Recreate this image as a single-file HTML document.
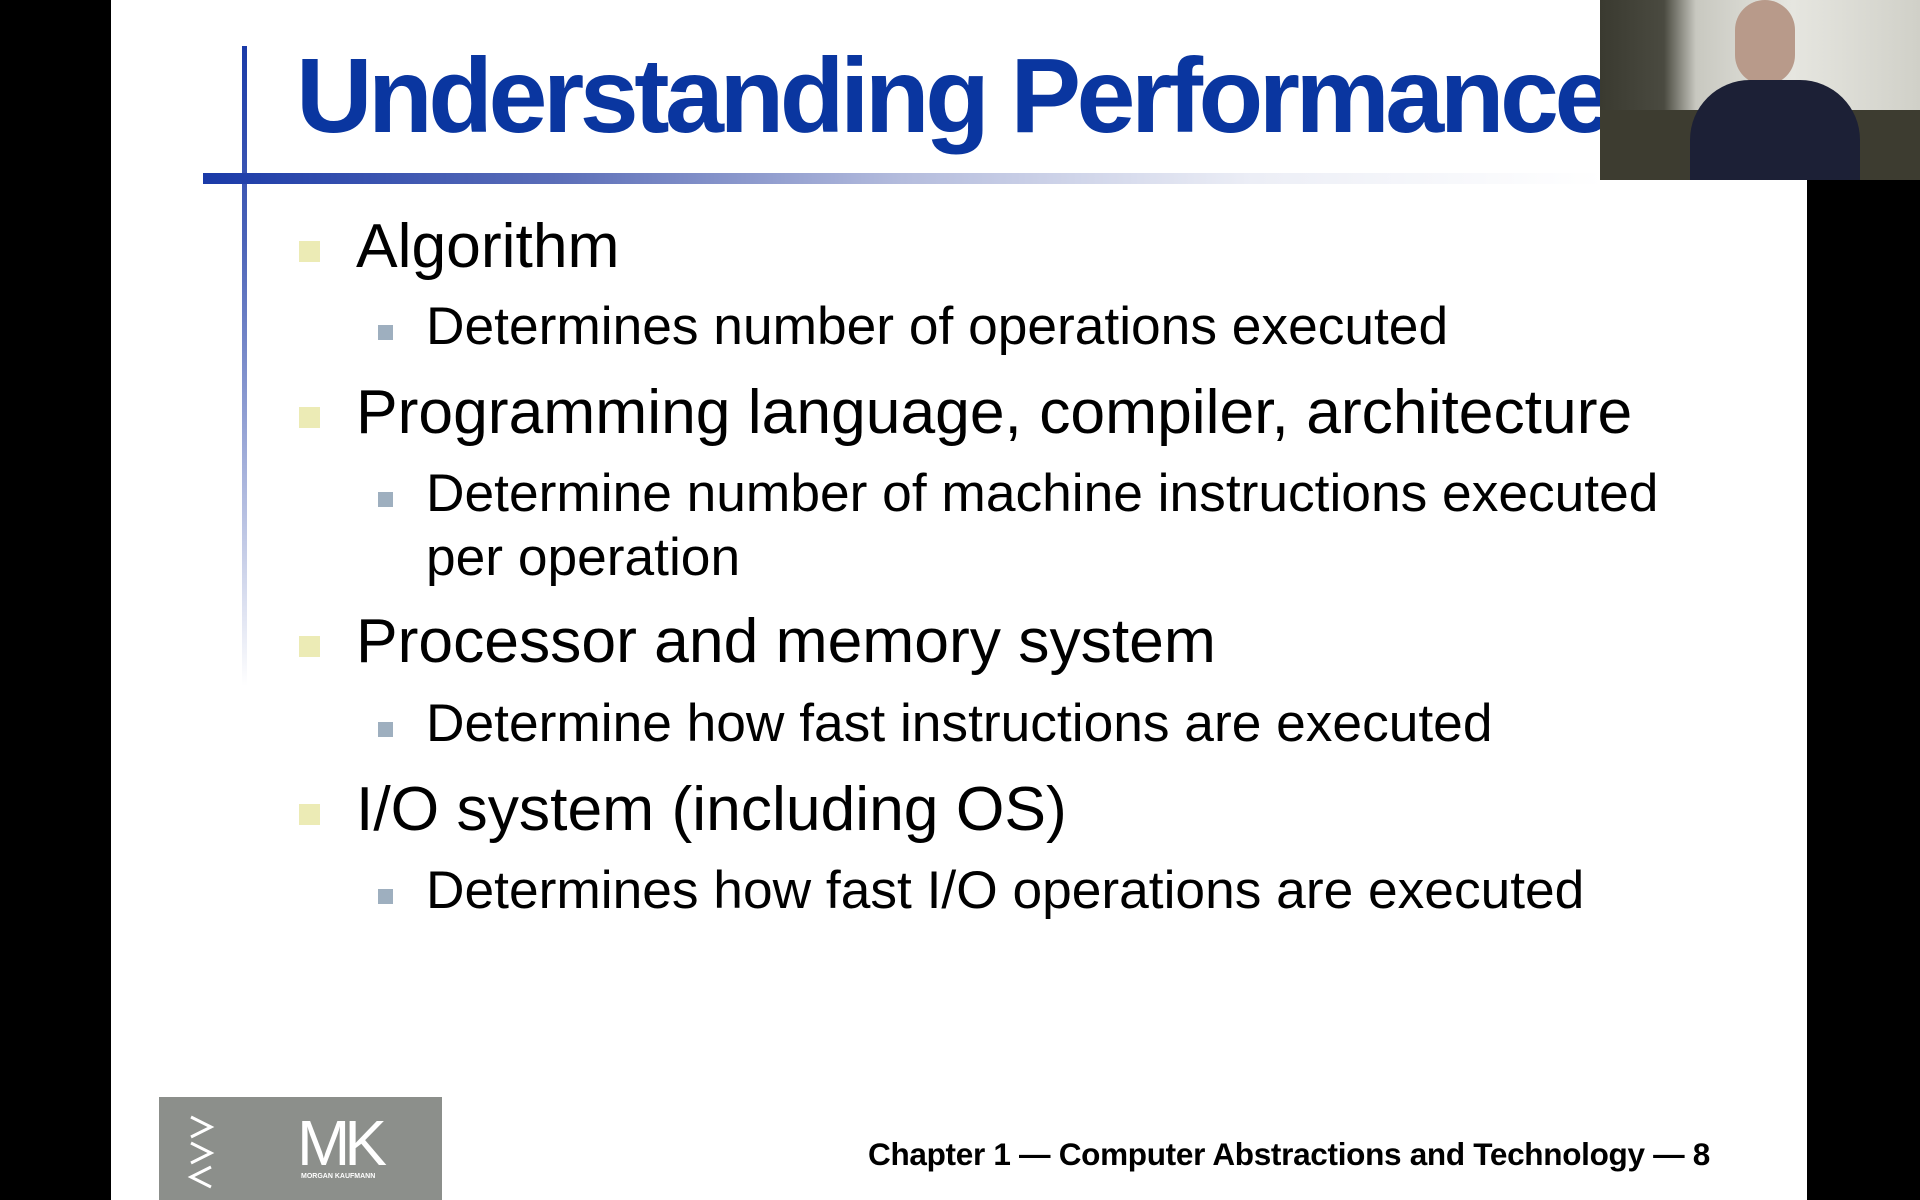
<!DOCTYPE html>
<html><head><meta charset="utf-8"><style>
body{margin:0;width:1920px;height:1200px;background:#000;position:relative;overflow:hidden;font-family:"Liberation Sans",Arial,sans-serif}
.slide{position:absolute;left:111px;top:0;width:1696px;height:1200px;background:#fff}
.t{position:absolute;white-space:nowrap;color:#000}
.b1{position:absolute;width:21px;height:21px;background:#ecebb5}
.b2{position:absolute;width:15px;height:15px;background:#9eafbf}
.l1{font-size:62.4px}
.l2{font-size:53.3px}
</style></head><body>
<div class="slide"></div>
<div style="position:absolute;left:242px;top:46px;width:5px;height:640px;background:linear-gradient(#1a3aa8,#4a62b8 30%,#c8cfe8 80%,rgba(255,255,255,0))"></div>
<div style="position:absolute;left:203px;top:173px;width:1400px;height:11px;background:linear-gradient(90deg,#1a3aa8,#5a6db8 25%,#b4bcdd 50%,#eceef6 75%,rgba(255,255,255,0))"></div>
<div class="t" style="left:296px;top:36px;font-size:106px;font-weight:bold;color:#0a36a0;letter-spacing:-4.5px">Understanding Performance</div>

<div class="b1" style="left:299px;top:241px"></div>
<div class="t l1" style="left:356px;top:211px">Algorithm</div>
<div class="b2" style="left:378px;top:325px"></div>
<div class="t l2" style="left:426px;top:296px">Determines number of operations executed</div>

<div class="b1" style="left:299px;top:407px"></div>
<div class="t l1" style="left:356px;top:377px">Programming language, compiler, architecture</div>
<div class="b2" style="left:378px;top:492px"></div>
<div class="t l2" style="left:426px;top:463px">Determine number of machine instructions executed</div>
<div class="t l2" style="left:426px;top:527px">per operation</div>

<div class="b1" style="left:299px;top:636px"></div>
<div class="t l1" style="left:356px;top:606px">Processor and memory system</div>
<div class="b2" style="left:378px;top:722px"></div>
<div class="t l2" style="left:426px;top:693px">Determine how fast instructions are executed</div>

<div class="b1" style="left:299px;top:804px"></div>
<div class="t l1" style="left:356px;top:774px">I/O system (including OS)</div>
<div class="b2" style="left:378px;top:889px"></div>
<div class="t l2" style="left:426px;top:860px">Determines how fast I/O operations are executed</div>

<div style="position:absolute;left:159px;top:1097px;width:283px;height:103px;background:#8c8f8b">
  <svg style="position:absolute;left:28px;top:16px" width="30" height="76" viewBox="0 0 30 76" fill="none" stroke="#fff" stroke-width="3"><path d="M4 4 L24 14 L4 24"/><path d="M4 30 L24 40 L4 50"/><path d="M24 54 L4 64 L24 74"/></svg>
  <div style="position:absolute;left:138px;top:14px;color:#fff;font-size:64px;line-height:64px;letter-spacing:-6px">MK</div>
  <div style="position:absolute;left:142px;top:76px;color:#fff;font-size:7px;font-weight:bold">MORGAN KAUFMANN</div>
</div>
<div class="t" style="left:868px;top:1136px;font-size:31.5px;font-weight:bold;letter-spacing:-0.3px">Chapter 1 — Computer Abstractions and Technology — 8</div>

<div style="position:absolute;left:1600px;top:0;width:320px;height:180px;background:linear-gradient(90deg,#3a3a30,#4a4a40 20%,#c8c8c0 30%,#e6e6e0 60%,#d0d0c8)">
  <div style="position:absolute;left:0;top:110px;width:320px;height:70px;background:#3d3c30"></div>
  <div style="position:absolute;left:135px;top:0;width:60px;height:85px;border-radius:30px;background:#b89a8a"></div>
  <div style="position:absolute;left:90px;top:80px;width:170px;height:100px;border-radius:60px 60px 0 0;background:#1c2036"></div>
</div>
</body></html>
